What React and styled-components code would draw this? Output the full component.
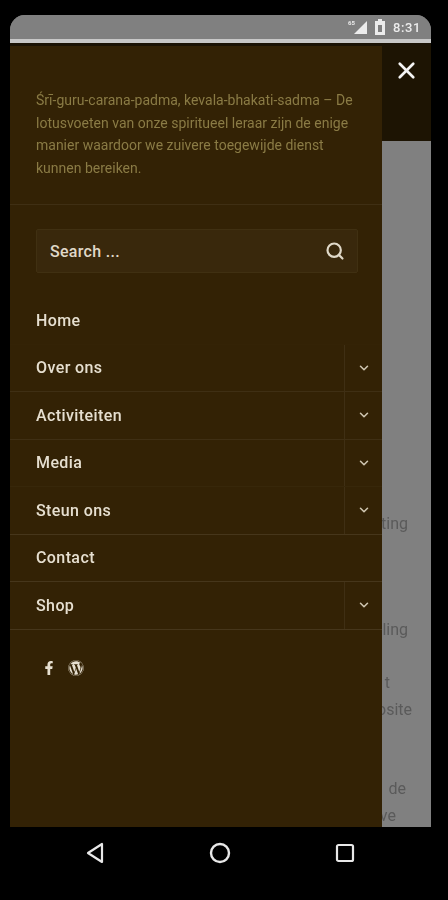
import React from 'react'
import styled, { createGlobalStyle } from 'styled-components'
import { X, Search, ChevronDown } from 'lucide-react'
import { FaFacebookF, FaWordpress } from 'react-icons/fa'

const GlobalStyle = createGlobalStyle`
  html, body {
    margin: 0;
    padding: 0;
    background: #000;
    font-family: Roboto, "Liberation Sans", sans-serif;
  }
`

const Phone = styled.div`
  width: 448px;
  height: 900px;
  background: #000;
  display: flex;
  flex-direction: column;
  box-sizing: border-box;
  padding: 15px 17px 0 10px;
  overflow: hidden;
`

const Screen = styled.div`
  height: 812px;
  display: flex;
  flex-direction: column;
  border-radius: 15px 15px 0 0;
  overflow: hidden;
  background: #808080;
`

const StatusBar = styled.div`
  height: 24px;
  flex: none;
  background: #808080;
  display: flex;
  align-items: center;
  justify-content: flex-end;
  gap: 7px;
  padding-right: 10px;
  color: #ececec;
  filter: blur(0.6px);
`

const Clock = styled.span`
  font-size: 13px;
  font-weight: 500;
  letter-spacing: 0.6px;
  margin-left: 1px;
`

const StatusRule = styled.div`
  height: 4px;
  flex: none;
  background: #c8c8c8;
`

const Gap = styled.div`
  height: 3px;
  flex: none;
  background: #1b1305;
`

const Body = styled.div`
  flex: 1;
  display: flex;
  min-height: 0;
`

const Drawer = styled.nav`
  width: 372px;
  flex: none;
  background: #332205;
  display: flex;
  flex-direction: column;
`

const Intro = styled.p`
  margin: 0;
  padding: 43px 28px 24px 26px;
  height: 159px;
  box-sizing: border-box;
  font-size: 14px;
  line-height: 22.7px;
  color: #8a7b45;
  border-bottom: 1px solid #3f2f14;
  filter: blur(0.6px);
`

const SearchBox = styled.div`
  margin: 24px 24px 24px 26px;
  height: 44px;
  box-sizing: border-box;
  background: #39280c;
  border: 1px solid #403012;
  border-radius: 2px;
  display: flex;
  align-items: center;
  justify-content: space-between;
  padding: 0 12px 0 13px;
  color: #e0d9c9;
  font-size: 16px;
  font-weight: 500;
  letter-spacing: 0.3px;
`

const SearchGlyph = styled(Search)`
  filter: blur(0.4px);
`

const Menu = styled.ul`
  list-style: none;
  margin: 0;
  padding: 0;
`

const Row = styled.li`
  height: 47.5px;
  box-sizing: border-box;
  display: flex;
  align-items: stretch;
  border-bottom: 1px solid ${p => p.$line};
`

const RowLabel = styled.a`
  flex: 1;
  display: flex;
  align-items: center;
  padding-left: 26px;
  font-size: 16px;
  font-weight: 500;
  letter-spacing: 0.4px;
  color: #e6dfd0;
  filter: blur(0.5px);
`

const Toggle = styled.button`
  width: 38px;
  flex: none;
  padding: 0;
  background: none;
  border: 0;
  border-left: 1px solid #3f2f14;
  color: #d0c7b2;
  display: flex;
  align-items: center;
  justify-content: center;
  filter: blur(0.3px);
`

const Social = styled.div`
  display: flex;
  align-items: center;
  gap: 12px;
  padding: 30px 0 0 32px;
  color: #e6dfd0;
  filter: blur(0.5px);
`

const Side = styled.div`
  flex: 1;
  display: flex;
  flex-direction: column;
  min-width: 0;
`

const SideHeader = styled.div`
  height: 95px;
  flex: none;
  background: #1d1403;
  display: flex;
  justify-content: center;
  padding: 11px 1px 0 0;
  box-sizing: border-box;
  color: #f4f4f4;
`

const SideText = styled.div`
  flex: 1;
  background: #808080;
  padding-top: 369.5px;
  overflow: hidden;
  filter: blur(0.7px);
`

// text is cut off on the left by the drawer, so lines hang from the right
const SideLine = styled.div`
  height: 26.6px;
  line-height: 26.6px;
  font-size: 16px;
  color: #5a5a5a;
  display: flex;
  justify-content: flex-end;
  white-space: nowrap;
  padding-right: ${p => p.$right}px;
`

const NavBar = styled.div`
  flex: 1;
  display: flex;
  color: #e8e8e8;
  filter: blur(0.4px);
`

const NavSlot = styled.div`
  flex: none;
  width: ${p => p.$w}px;
  display: flex;
  align-items: center;
  justify-content: center;
  padding-bottom: 21px;
`

const items = [
  { label: 'Home', line: '#342306' },
  { label: 'Over ons', sub: true, line: '#3f2f14' },
  { label: 'Activiteiten', sub: true, line: '#3f2f14' },
  { label: 'Media', sub: true, line: '#37270a' },
  { label: 'Steun ons', sub: true, line: '#46361b' },
  { label: 'Contact', line: '#46361b' },
  { label: 'Shop', sub: true, line: '#46361b' },
]

const sideLines = [
  ['ting', 23],
  ['', 0],
  ['', 0],
  ['', 0],
  ['ling', 23],
  ['', 0],
  ['t', 41],
  ['osite', 19],
  ['', 0],
  ['', 0],
  ['de', 25],
  ['ve', 35],
]

const SignalIcon = () => (
  <svg width="20" height="16" viewBox="0 0 20 16">
    <path d="M19 2v13H6z" fill="currentColor" />
    <text x="0" y="6" fontSize="6" fontWeight="700" fill="currentColor" fontFamily="Roboto">
      65
    </text>
  </svg>
)

const BatteryIcon = () => (
  <svg width="10" height="16" viewBox="0 0 10 16">
    <path d="M3 0h4v2h3v14H0V2h3z" fill="currentColor" />
    <rect x="3" y="6" width="4" height="7" fill="#808080" />
  </svg>
)

const App = () => (
  <Phone>
    <GlobalStyle />
    <Screen>
      <StatusBar>
        <SignalIcon />
        <BatteryIcon />
        <Clock>8:31</Clock>
      </StatusBar>
      <StatusRule />
      <Gap />
      <Body>
        <Drawer>
          <Intro>
            Śrī-guru-carana-padma, kevala-bhakati-sadma – De lotusvoeten van onze spiritueel leraar
            zijn de enige manier waardoor we zuivere toegewijde dienst kunnen bereiken.
          </Intro>
          <SearchBox>
            Search ...
            <SearchGlyph size={20} strokeWidth={2.6} />
          </SearchBox>
          <Menu>
            {items.map(item => (
              <Row key={item.label} $line={item.line}>
                <RowLabel>{item.label}</RowLabel>
                {item.sub && (
                  <Toggle>
                    <ChevronDown size={14} strokeWidth={2.6} />
                  </Toggle>
                )}
              </Row>
            ))}
          </Menu>
          <Social>
            <FaFacebookF size={14} />
            <FaWordpress size={16} />
          </Social>
        </Drawer>
        <Side>
          <SideHeader>
            <X size={27} strokeWidth={2.4} />
          </SideHeader>
          <SideText>
            {sideLines.map(([text, right], i) => (
              <SideLine key={i} $right={right}>
                {text}
              </SideLine>
            ))}
          </SideText>
        </Side>
      </Body>
    </Screen>
    <NavBar>
      <NavSlot $w={172}>
        <svg width="22" height="22" viewBox="0 0 22 22" fill="none" stroke="currentColor" strokeWidth="2.2" strokeLinejoin="round">
          <path d="M17 2v18L3 11z" />
        </svg>
      </NavSlot>
      <NavSlot $w={76}>
        <svg width="22" height="22" viewBox="0 0 22 22" fill="none" stroke="currentColor" strokeWidth="2.4">
          <circle cx="11" cy="11" r="9" />
        </svg>
      </NavSlot>
      <NavSlot $w={173}>
        <svg width="20" height="20" viewBox="0 0 20 20" fill="none" stroke="currentColor" strokeWidth="2.2" strokeLinejoin="round">
          <rect x="2" y="2" width="16" height="16" rx="1.5" />
        </svg>
      </NavSlot>
    </NavBar>
  </Phone>
)

export default App
